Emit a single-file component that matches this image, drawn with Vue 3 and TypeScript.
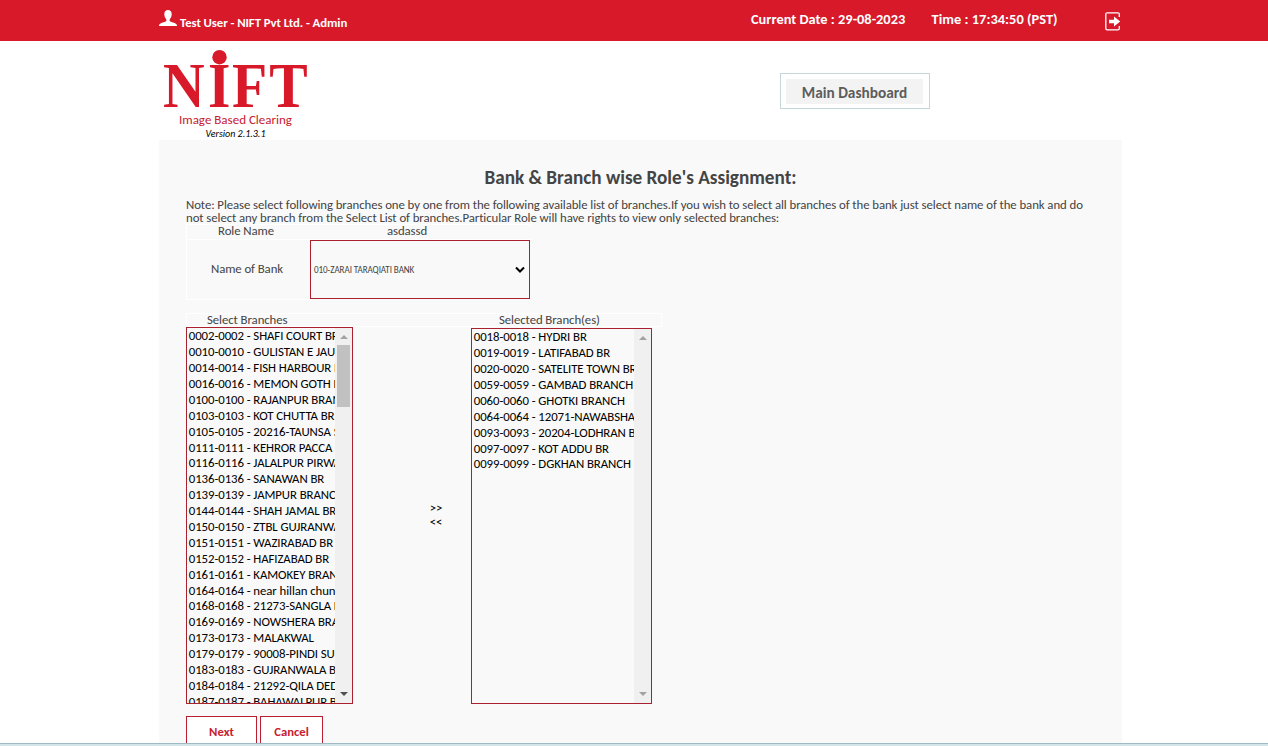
<script setup lang="ts">
interface BranchList {
  id: string
  title: string
  items: string[]
  scrollable: boolean
}

const available: BranchList = {
  id: 'available',
  title: 'Select Branches',
  scrollable: true,
  items: [
    '0002-0002 - SHAFI COURT BR',
    '0010-0010 - GULISTAN E JAU',
    '0014-0014 - FISH HARBOUR BR',
    '0016-0016 - MEMON GOTH BR',
    '0100-0100 - RAJANPUR BRAN',
    '0103-0103 - KOT CHUTTA BR',
    '0105-0105 - 20216-TAUNSA S',
    '0111-0111 - KEHROR PACCA',
    '0116-0116 - JALALPUR PIRWA',
    '0136-0136 - SANAWAN BR',
    '0139-0139 - JAMPUR BRANC',
    '0144-0144 - SHAH JAMAL BR',
    '0150-0150 - ZTBL GUJRANWA',
    '0151-0151 - WAZIRABAD BR',
    '0152-0152 - HAFIZABAD BR',
    '0161-0161 - KAMOKEY BRAN',
    '0164-0164 - near hillan chun',
    '0168-0168 - 21273-SANGLA H',
    '0169-0169 - NOWSHERA BRA',
    '0173-0173 - MALAKWAL',
    '0179-0179 - 90008-PINDI SU',
    '0183-0183 - GUJRANWALA B',
    '0184-0184 - 21292-QILA DED',
    '0187-0187 - BAHAWALPUR B',
  ],
}

const selected: BranchList = {
  id: 'selected',
  title: 'Selected Branch(es)',
  scrollable: false,
  items: [
    '0018-0018 - HYDRI BR',
    '0019-0019 - LATIFABAD BR',
    '0020-0020 - SATELITE TOWN BR',
    '0059-0059 - GAMBAD BRANCH',
    '0060-0060 - GHOTKI BRANCH',
    '0064-0064 - 12071-NAWABSHA',
    '0093-0093 - 20204-LODHRAN B',
    '0097-0097 - KOT ADDU BR',
    '0099-0099 - DGKHAN BRANCH',
  ],
}
const lists = [available, selected]
</script>

<template>
  <div class="page">
    <header class="topbar">
      <div class="user">
        <svg class="user-icon" width="18" height="17" viewBox="0 0 18 17">
          <path fill="#fff" d="M9 0C6.600 0 5.200 1.700 5.300 4.300c.1 2.200.9 4 2 5v1.600c-1 .9-4 1.500-5.800 2.500C.4 14 0 14.700 0 16h18c0-1.300-.4-2-1.500-2.600-1.800-1-4.800-1.600-5.800-2.500V9.300c1.100-1 1.900-2.800 2-5C12.800 1.700 11.400 0 9 0z" />
        </svg>
        <span class="user-name">Test User - NIFT Pvt Ltd. - Admin</span>
      </div>
      <span class="date">Current Date : 29-08-2023</span>
      <span class="time">Time : 17:34:50 (PST)</span>
      <svg class="logout" width="16" height="19" viewBox="0 0 16 19">
        <path fill="none" stroke="#fff" stroke-width="1.300" d="M14.300 5V2.200Q14.300.8 12.900.8H2.200Q.8.8.8 2.200v14.200q0 1.400 1.400 1.400h10.700q1.400 0 1.400-1.400V14" />
        <path fill="#fff" d="M4 7.700h5V4.500l6.200 5L9 14.500v-3.200H4z" />
      </svg>
    </header>

    <div class="brand-row">
      <div class="brand">
        <svg class="logo" width="150" height="60" viewBox="0 0 150 60">
          <text class="logo-text" x="3.400 53.300 80.100 121.300" y="58" transform="scale(0.9 1)">NIFT</text>
          <circle cx="59.500" cy="8.200" r="7.200" fill="#d7192a" />
        </svg>
        <div class="tagline">Image Based Clearing</div>
        <div class="version">Version 2.1.3.1</div>
      </div>
      <a class="dashboard"><span>Main Dashboard</span></a>
    </div>

    <main class="panel">
      <h1>Bank &amp; Branch wise Role's Assignment:</h1>
      <p class="note">
        <span class="line">Note: Please select following branches one by one from the following available list of branches.If you wish to select all branches of the bank just select name of the bank and do</span>
        <span class="line">not select any branch from the Select List of branches.Particular Role will have rights to view only selected branches:</span>
      </p>
      <div class="role-grid">
        <div class="cell role-label"><span>Role Name</span></div>
        <div class="cell role-value"><span>asdassd</span></div>
        <div class="cell bank-label"><span>Name of Bank</span></div>
        <div class="bank-select">
          <span>010-ZARAI TARAQIATI BANK</span>
          <svg width="10" height="8" viewBox="0 0 10 8">
            <path d="M1 1.500l4 4 4-4" fill="none" stroke="#000" stroke-width="2" />
          </svg>
        </div>
      </div>

      <div class="list-head">
        <span class="head-available">{{ available.title }}</span>
        <span class="head-selected">{{ selected.title }}</span>
      </div>
      <div class="lists">
        <template v-for="list in lists" :key="list.id">
          <div class="listbox" :class="list.id">
            <ul>
              <li v-for="item in list.items" :key="item">{{ item }}</li>
            </ul>
            <div class="track">
              <i class="arrow up"></i>
              <i v-if="list.scrollable" class="thumb"></i>
              <i class="arrow down" :class="{ active: list.scrollable }"></i>
            </div>
          </div>
          <div v-if="list.id === 'available'" class="movers">
            <span>&gt;&gt;</span>
            <span>&lt;&lt;</span>
          </div>
        </template>
      </div>
      <div class="actions">
        <button class="next">Next</button>
        <button class="cancel">Cancel</button>
      </div>
    </main>
    <footer class="bottom-edge"></footer>
  </div>
</template>

<style>
body {
  margin: 0;
  overflow: hidden;
}
</style>

<style scoped>
* {
  box-sizing: border-box;
}
.page {
  width: 1268px;
  height: 746px;
  overflow: hidden;
  display: flex;
  flex-direction: column;
  background: #fff;
  color: #444;
  font-family: Carlito, Calibri, Lato, sans-serif;
  font-size: 12.800px;
  letter-spacing: -0.08px;
  white-space: nowrap;
}
.topbar {
  height: 41px;
  flex: none;
  display: flex;
  align-items: flex-start;
  padding-left: 159px;
  background: #d7192a;
  color: #fff;
  font-weight: 700;
}
.user {
  display: flex;
  width: 592px;
  padding-top: 10px;
}
.user-name {
  margin: 5px 0 0 3px;
  line-height: 16px;
}
.date,
.time {
  padding-top: 11px;
  font-size: 14.400px;
  line-height: 16px;
  letter-spacing: 0;
}
.date {
  width: 180.500px;
}
.time {
  width: 173.500px;
  letter-spacing: 0.03px;
}
.logout {
  margin-top: 12px;
}
.brand-row {
  height: 99px;
  flex: none;
  display: flex;
  align-items: flex-start;
  padding-left: 160px;
}
.brand {
  width: 620px;
  padding-top: 8px;
}
.logo {
  display: block;
}
.logo-text {
  font-family: "Liberation Serif", serif;
  font-weight: 700;
  font-size: 64px;
  letter-spacing: 0;
  fill: #d7192a;
}
.tagline {
  width: 151px;
  text-align: center;
  margin-top: 4px;
  font-size: 13px;
  line-height: 14px;
  letter-spacing: 0;
  color: #c8202e;
}
.version {
  width: 151px;
  text-align: center;
  font-size: 10px;
  line-height: 13px;
  letter-spacing: 0;
  font-style: italic;
  color: #000;
}
.dashboard {
  width: 150px;
  height: 36px;
  margin-top: 32px;
  border: 1px solid #c5d6dc;
  padding: 5px 6px 4px 5px;
}
.dashboard span {
  display: block;
  height: 25px;
  background: #f3f3f3;
  color: #5c5c5c;
  font-size: 15.300px;
  letter-spacing: 0;
  font-weight: 700;
  line-height: 27px;
  text-align: center;
}
.panel {
  width: 963px;
  flex: 1;
  min-height: 0;
  overflow: hidden;
  margin-left: 159px;
  padding-left: 27px;
  background: #f9f9f9;
}
h1 {
  width: 909px;
  margin: 28px 0 0;
  font-size: 19.200px;
  line-height: 20px;
  letter-spacing: 0;
  text-align: center;
}
.note {
  margin: 10px 0 0;
  line-height: 13px;
}
.line {
  display: block;
}
.role-grid {
  width: 344px;
  display: grid;
  grid-template-columns: 124px 220px;
  grid-template-rows: 15px 60px;
  border: 1px solid #fff;
  border-bottom: 0;
  border-right: 0;
}
.cell {
  display: flex;
  justify-content: center;
  align-items: center;
  padding-bottom: 2px;
  line-height: 12px;
  border-bottom: 1px solid #fff;
}
.role-label {
  padding-right: 6px;
}
.bank-label {
  padding-right: 4px;
}
.role-value {
  padding-right: 28px;
}
.bank-select {
  width: 220px;
  height: 59px;
  margin-left: -1px;
  display: flex;
  align-items: center;
  justify-content: space-between;
  padding: 0 4px 0 3px;
  border: 1px solid #a9202f;
  font-size: 9.100px;
}
.list-head {
  width: 476px;
  height: 14px;
  margin-top: 13px;
  display: flex;
  line-height: 11px;
  border: 1px solid #fff;
}
.head-available {
  width: 312px;
  padding-left: 20px;
}
.lists {
  height: 377px;
  display: flex;
  align-items: flex-end;
  color: #000;
}
.listbox {
  display: flex;
  overflow: hidden;
  border: 1px solid #a9202f;
}
.listbox.available {
  width: 167px;
  height: 377px;
}
.listbox.selected {
  width: 181px;
  height: 376px;
}
ul {
  flex: 1;
  min-width: 0;
  height: 100%;
  overflow: hidden;
  margin: 0;
  padding: 0.300px 0 0 1.800px;
  list-style: none;
}
li {
  height: 15.900px;
  line-height: 15.900px;
}
.track {
  width: 17px;
  height: 100%;
  flex: none;
  display: flex;
  flex-direction: column;
  align-items: center;
  background: #f0f0f0;
}
.arrow {
  border: 4px solid transparent;
}
.up {
  margin-top: 3px;
  border-bottom-color: #a3a3a3;
}
.down {
  margin-top: auto;
  margin-bottom: 3px;
  border-top-color: #a3a3a3;
}
.down.active {
  border-top-color: #505050;
}
.thumb {
  width: 13px;
  height: 62px;
  margin-top: 6px;
  background: #c1c1c1;
}
.movers {
  width: 118px;
  height: 377px;
  display: flex;
  flex-direction: column;
  align-items: center;
  padding: 174px 0 0 48px;
  line-height: 14px;
}
.actions {
  display: flex;
  gap: 3px;
  margin-top: 12px;
}
button {
  height: 33px;
  padding: 0 0 2px;
  border: 1px solid #b91f30;
  background: #fff;
  color: #c8202e;
  font-family: inherit;
  font-size: 12.700px;
  font-weight: 700;
}
.next {
  width: 71px;
}
.cancel {
  width: 63px;
}
.bottom-edge {
  height: 3px;
  flex: none;
  background: #d4e5e9;
  border-top: 1px solid #9fbac4;
}
</style>
